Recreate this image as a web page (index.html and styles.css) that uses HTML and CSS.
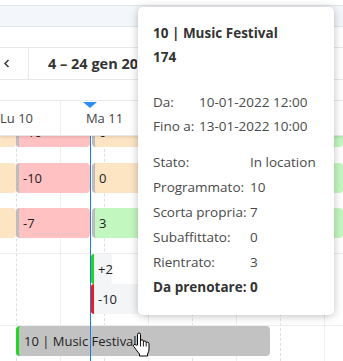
FILE: index.html
```html
<!DOCTYPE html>
<html lang="it">
<head>
<meta charset="utf-8">
<link rel="stylesheet" href="styles.css">
</head>
<body>
<div class="s1"></div>
<div class="band"></div>
<div class="gap"></div>
<div class="toolbar">
  <div class="nav"><svg width="7" height="9" viewBox="0 0 7 9"><path d="M5.5 1 L2 4.5 L5.5 8" fill="none" stroke="#333" stroke-width="1.4"/></svg></div>
  <div class="range"><span class="range-text">4 – 24 gen 2022</span></div>
</div>
<div class="gap"></div>
<div class="timeline">
  <div class="header">
    <div class="hdays">
      <div class="hday">Lu 10</div>
      <div class="hday">Ma 11</div>
      <div class="hday"></div>
      <div class="hday"></div>
    </div>
    <span class="now-tri"></span>
  </div>
  <div class="body">
    <div class="cols">
      <div class="day"><div class="half"></div><div class="half"></div></div>
      <div class="day"><div class="half"></div><div class="half"></div></div>
      <div class="day"><div class="half"></div><div class="half"></div></div>
      <div class="day"><div class="half"></div><div class="half"></div></div>
      <div class="day"><div class="half"></div><div class="half"></div></div>
    </div>
    <div class="sec sec-a">
      <div class="row">
        <div class="cell orange first" style="width:26px"></div>
        <div class="cell pink" style="width:74px">-10</div>
        <div class="cell orange next" style="width:160px">0</div>
        <div class="cell green next" style="width:89px"></div>
      </div>
      <div class="row r2">
        <div class="cell orange first" style="width:26px"></div>
        <div class="cell pink" style="width:74px">-10</div>
        <div class="cell orange next" style="width:160px">0</div>
        <div class="cell green next" style="width:89px"></div>
      </div>
      <div class="row r3">
        <div class="cell orange first" style="width:26px"></div>
        <div class="cell pink" style="width:74px">-7</div>
        <div class="cell green next" style="width:251px">3</div>
      </div>
    </div>
    <div class="sec sec-b">
      <div class="mini plus" style="width:21px">+2</div>
      <div class="mini minus" style="width:80px">-10</div>
    </div>
    <div class="sec sec-c">
      <div class="event" style="width:254px">10 | Music Festival</div>
    </div>
    <div class="now-line"></div>
  </div>
</div>
<div class="tooltip">
  <div class="tt-title">10 | Music Festival</div>
  <div class="tt-title">174</div>
  <div class="tt-grid dates">
    <span class="l">Da:</span><span class="v">10-01-2022 12:00</span>
    <span class="l">Fino a:</span><span class="v">13-01-2022 10:00</span>
  </div>
  <div class="tt-grid stats">
    <span class="l">Stato:</span><span class="v">In location</span>
    <span class="l">Programmato:</span><span class="v">10</span>
    <span class="l">Scorta propria:</span><span class="v">7</span>
    <span class="l">Subaffittato:</span><span class="v">0</span>
    <span class="l">Rientrato:</span><span class="v">3</span>
    <span class="l b">Da prenotare:</span><span class="v b">0</span>
  </div>
</div>
<svg class="cursor" width="19" height="25" viewBox="0 0 19 25">
  <path d="M5.5 13 L5.5 2.6 Q5.5 1 7 1 Q8.5 1 8.5 2.6 L8.5 9 Q8.6 7.8 10 7.8 Q11.4 7.8 11.4 9.2 L11.4 10 Q11.6 9 12.9 9 Q14.2 9 14.2 10.5 L14.2 11 Q14.5 10.2 15.6 10.2 Q17 10.2 17 11.8 L17 17 Q17 20 15.5 22 L15.5 24 L7.5 24 L7.5 22 Q6 20.5 4 17.5 L1.6 14.2 Q1 13 2.1 12.5 Q3.2 12.1 4.2 13.2 Z" fill="#fff" stroke="#000" stroke-width="1" stroke-linejoin="round"/>
  <path d="M8.5 9 L8.5 14.5 M11.4 10 L11.4 14.5 M14.2 11 L14.2 14.5" stroke="#000" stroke-width="0.9" fill="none"/>
</svg>
</body>
</html>
```
FILE: styles.css
```css
body {
  margin: 0;
  width: 343px;
  height: 361px;
  overflow: hidden;
  position: relative;
  background: #fff;
  color: #333;
  font-family: "Open Sans", "Noto Sans", sans-serif;
}
.s1 { height: 5px; border-bottom: 1px solid #e2e5ea; }
.band { height: 20px; background: #f3f6fa; border-bottom: 1px solid #e2e5ea; }
.gap { height: 20px; border-bottom: 1px solid #e6e8ec; }
.toolbar {
  display: flex;
  height: 31px;
  border-bottom: 1px solid #e6e8ec;
  overflow: hidden;
}
.nav {
  flex: none;
  width: 29px;
  box-sizing: border-box;
  padding-right: 15px;
  border-right: 1px solid #e6e8ec;
  display: flex;
  align-items: center;
  justify-content: center;
}
.range {
  padding-left: 19px;
  display: flex;
  align-items: center;
  width: 89px;
  overflow: hidden;
  white-space: nowrap;
  font-weight: 700;
  font-size: 14.5px;
  color: #333;
}
.timeline { position: relative; overflow: hidden; }
.header {
  position: relative;
  z-index: 2;
  height: 34px;
  background: #fff;
  border-bottom: 1px solid #e6e8ec;
  box-shadow: 0 1px 3px rgba(0, 0, 0, 0.12);
  overflow: hidden;
}
.hdays { display: flex; height: 100%; }
.hday {
  flex: 0 0 88px;
  box-sizing: border-box;
  border-right: 1px solid #eceef2;
  display: flex;
  align-items: center;
  justify-content: center;
  font-size: 13px;
  color: #444;
}
.hday:first-child { flex-basis: 61px; padding-right: 27px; box-sizing: border-box; }
.hday:first-child { justify-content: flex-start; padding-left: 0; }
.now-tri {
  position: absolute;
  left: 83px;
  top: 1px;
  width: 0;
  height: 0;
  border-left: 7px solid transparent;
  border-right: 7px solid transparent;
  border-top: 6px solid #2b8cf2;
}
.body {
  position: relative;
  z-index: 1;
  margin-top: -27px;
  height: 252px;
  overflow: hidden;
}
.cols {
  position: absolute;
  top: 0;
  bottom: 0;
  left: 0;
  right: 0;
  display: flex;
  overflow: hidden;
}
.day { flex: 0 0 88px; display: flex; }
.day:first-child { flex-basis: 61px; }
.half { flex: 0 0 44px; box-sizing: border-box; }
.day:first-child .half:first-child { flex-basis: 17px; }
.half:first-child { border-right: 1px dashed #dcdfe4; }
.half:last-child { border-right: 1px solid #eceef2; }
.sec { position: relative; z-index: 1; }
.sec-a { padding: 8px 0 15px; border-bottom: 1px solid #eceef2; }
.sec-b { padding: 0 0 11px; border-bottom: 1px solid #eceef2; }
.row { display: flex; height: 30px; }
.row.r2 { margin-top: 16px; }
.row.r3 { margin-top: 15px; }
.cell {
  flex: none;
  box-sizing: border-box;
  height: 30px;
  border-radius: 4px;
  border-left: 3px solid #bdbdbd;
  padding-left: 4px;
  font-size: 13px;
  line-height: 30px;
  color: #222;
  white-space: nowrap;
  overflow: hidden;
}
.cell.first { width: 16px !important; border-left: none; border-radius: 0 4px 4px 0; }
.cell.next { margin-left: 2px; }
.orange { background: #fde4c3; }
.pink { background: #ffc1c1; }
.green { background: #c3f7c0; }
.mini {
  box-sizing: border-box;
  margin-left: 91px;
  height: 30px;
  border-radius: 3px;
  border-left: 3px solid;
  padding-left: 4px;
  background: #f4f5f6;
  font-size: 13px;
  line-height: 30px;
  color: #222;
}
.mini.plus { border-left-color: #22d622; }
.mini.minus { border-left-color: #ec1c1c; }
.event {
  box-sizing: border-box;
  margin-left: 16px;
  height: 30px;
  border-radius: 4px;
  border-left: 3px solid #22d622;
  padding-left: 5px;
  background: #c2c2c2;
  font-size: 13px;
  line-height: 30px;
  color: #222;
  white-space: nowrap;
}
.now-line {
  position: absolute;
  z-index: 3;
  left: 90px;
  top: 0;
  bottom: 0;
  width: 1px;
  background: #1e7be6;
}
.tooltip {
  position: absolute;
  z-index: 10;
  left: 138px;
  top: 7px;
  width: 196px;
  height: 308px;
  box-sizing: border-box;
  padding: 14px 15px 15px;
  background: #fff;
  border-radius: 5px;
  box-shadow: 0 1px 8px rgba(0, 0, 0, 0.25);
  font-size: 13.5px;
  color: #4a4a4a;
  white-space: nowrap;
}
.tt-title { font-weight: 700; line-height: 24px; color: #333; }
.tt-grid { display: grid; }
.dates { margin-top: 21px; grid-template-columns: 46px auto; grid-auto-rows: 24px; line-height: 24px; }
.stats { margin-top: 12px; grid-template-columns: 97px auto; grid-auto-rows: 25px; line-height: 25px; }
.tt-grid .b { font-weight: 700; color: #333; }
.cursor {
  position: absolute;
  z-index: 11;
  left: 132px;
  top: 332px;
}
```
